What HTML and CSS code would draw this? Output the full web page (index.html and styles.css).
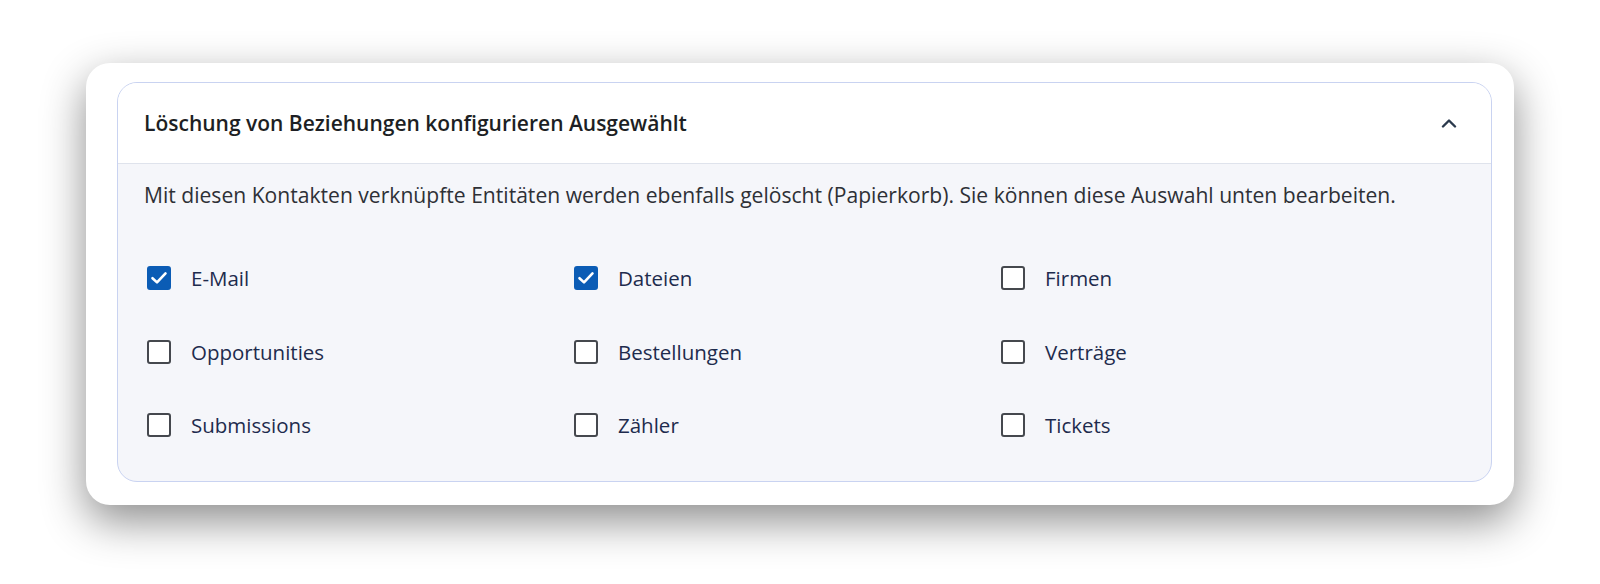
FILE: index.html
```html
<!DOCTYPE html>
<html lang="de">
<head>
    <meta charset="UTF-8">
    <meta name="viewport" content="width=device-width, initial-scale=1.0">
    <title>Löschung von Beziehungen</title>
    <link rel="stylesheet" href="styles.css">
</head>
<body>
    <div class="card">
        <section class="accordion">
            <header class="accordion-header">
                <h2 class="accordion-title">Löschung von Beziehungen konfigurieren Ausgewählt</h2>
                <svg class="chevron" width="16" height="10" viewBox="0 0 16 10">
                    <path d="M2 8.5 L8 2.5 L14 8.5" fill="none" stroke="#2b3a4d" stroke-width="2.4" stroke-linecap="round" stroke-linejoin="round"/>
                </svg>
            </header>
            <div class="accordion-body">
                <p class="hint">Mit diesen Kontakten verknüpfte Entitäten werden ebenfalls gelöscht (Papierkorb). Sie können diese Auswahl unten bearbeiten.</p>
                <ul class="options">
                    <li class="option checked"><span class="box"><svg width="20" height="20" viewBox="0 0 20 20"><path d="M3.5 10.2 L8 14.4 L16.5 5.4" fill="none" stroke="#fff" stroke-width="2.6" stroke-linecap="round" stroke-linejoin="round"/></svg></span>E-Mail</li>
                    <li class="option checked"><span class="box"><svg width="20" height="20" viewBox="0 0 20 20"><path d="M3.5 10.2 L8 14.4 L16.5 5.4" fill="none" stroke="#fff" stroke-width="2.6" stroke-linecap="round" stroke-linejoin="round"/></svg></span>Dateien</li>
                    <li class="option"><span class="box"></span>Firmen</li>
                    <li class="option"><span class="box"></span>Opportunities</li>
                    <li class="option"><span class="box"></span>Bestellungen</li>
                    <li class="option"><span class="box"></span>Verträge</li>
                    <li class="option"><span class="box"></span>Submissions</li>
                    <li class="option"><span class="box"></span>Zähler</li>
                    <li class="option"><span class="box"></span>Tickets</li>
                </ul>
            </div>
        </section>
    </div>
</body>
</html>
```

FILE: styles.css
```css
html {
    background-color: #fff;
}

body {
    margin: 0;
    min-height: 584px;
    box-sizing: border-box;
    padding: 63px 0 0 86px;
    font-family: "Open Sans", "Noto Sans", sans-serif;
}

.card {
    width: 1428px;
    box-sizing: border-box;
    padding: 19px 22px 23px 31px;
    background-color: #fff;
    border-radius: 24px;
    box-shadow: 0 16px 44px rgba(0, 0, 0, 0.45);
}

.accordion {
    border: 1px solid #c9d3f1;
    border-radius: 20px;
    background-color: #f5f6fa;
    overflow: hidden;
}

.accordion-header {
    height: 80px;
    display: flex;
    align-items: center;
    justify-content: space-between;
    padding: 0 34px 0 26px;
    background-color: #fff;
    border-bottom: 1px solid #dfe3ec;
}

.accordion-title {
    margin: 0;
    font-size: 21px;
    font-weight: 600;
    color: #1d1f24;
}

.chevron {
    display: block;
}

.accordion-body {
    padding: 17px 26px 42px;
}

.hint {
    margin: 0 0 55px;
    font-size: 21.1px;
    line-height: 28px;
    color: #2e3036;
}

.options {
    list-style: none;
    margin: 0;
    padding: 0;
    display: grid;
    grid-template-columns: repeat(3, 417px);
    column-gap: 10px;
    row-gap: 45.5px;
}

.option {
    display: flex;
    align-items: center;
    height: 28px;
    font-size: 20.5px;
    color: #1e2b4d;
}

.box {
    width: 24px;
    height: 24px;
    box-sizing: border-box;
    margin: 0 20px 0 3px;
    border: 2px solid #45484e;
    border-radius: 3px;
    background-color: #fff;
    display: flex;
    align-items: center;
    justify-content: center;
}

.option.checked .box {
    background-color: #0b5cb5;
    border-color: #0b5cb5;
}

.box svg {
    display: block;
}
```
